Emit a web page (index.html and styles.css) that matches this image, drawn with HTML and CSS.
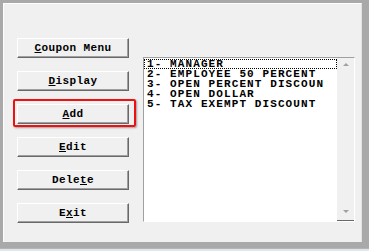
FILE: index.html
```html
<!DOCTYPE html>
<html lang="en">
<head>
<meta charset="UTF-8">
<title>Coupon Menu</title>
<link rel="stylesheet" href="styles.css">
</head>
<body>
<div class="frame">
  <div class="panel">
    <div class="buttons">
      <button class="btn"><u>C</u>oupon Menu</button>
      <button class="btn"><u>D</u>isplay</button>
      <div class="marked">
        <button class="btn"><u>A</u>dd</button>
        <span class="mark"></span>
      </div>
      <button class="btn"><u>E</u>dit</button>
      <button class="btn">Dele<u>t</u>e</button>
      <button class="btn">E<u>x</u>it</button>
    </div>

    <div class="listbox">
      <div class="items">
        <div class="item focus">1- MANAGER</div>
        <div class="item">2- EMPLOYEE 50 PERCENT</div>
        <div class="item">3- OPEN PERCENT DISCOUN</div>
        <div class="item">4- OPEN DOLLAR</div>
        <div class="item">5- TAX EXEMPT DISCOUNT</div>
      </div>
      <div class="scrollbar">
        <span class="arrow up"></span>
        <span class="arrow down"></span>
      </div>
    </div>
  </div>
</div>
</body>
</html>
```

FILE: styles.css
```css
html, body {
margin: 0;
height: 100%;
}

body {
background: #dfe6ee;
font-family: "Liberation Mono", monospace;
}

.frame {
height: 249px;
background: #a9a9a9;
padding: 3px 7px 0 3px;
box-sizing: border-box;
border-bottom: 1px solid #b4b4b4;
}

.panel {
height: 239px;
background: #f0f0f0;
border-top: 1px solid #fdfdfd;
border-left: 1px solid #fdfdfd;
border-right: 1px solid #e2e2e2;
box-sizing: border-box;
display: flex;
align-items: flex-start;
padding: 34px 0 0 13px;
}

.buttons {
width: 112px;
display: flex;
flex-direction: column;
gap: 13px;
}

.btn {
width: 112px;
height: 20px;
padding: 0;
margin: 0;
background: #f0f0f0;
border-top: 1px solid #ffffff;
border-left: 1px solid #ffffff;
border-right: 1px solid #696969;
border-bottom: 1px solid #696969;
box-shadow: inset -1px -1px 0 #a0a0a0;
font-family: "Liberation Mono", monospace;
font-weight: bold;
font-size: 11px;
letter-spacing: 0.4px;
color: #000;
cursor: pointer;
}

.btn u {
text-underline-offset: 1px;
}

.marked {
position: relative;
height: 20px;
}

.mark {
position: absolute;
left: -4px;
top: -5px;
right: -7px;
bottom: -3px;
border: 2px solid #ee1111;
border-radius: 2px;
box-shadow: 1px 1px 2px rgba(0,0,0,0.35);
}

.listbox {
margin: 19px 0 0 14px;
width: 212px;
height: 165px;
box-sizing: border-box;
border-top: 1px solid #a0a0a0;
border-left: 1px solid #a0a0a0;
border-bottom: 1px solid #ffffff;
border-right: 1px solid #ffffff;
background: #ffffff;
display: flex;
}

.items {
flex: 1;
padding-top: 1px;
}

.item {
height: 10px;
line-height: 10px;
padding-left: 3px;
font-weight: bold;
font-size: 11px;
letter-spacing: 1.1px;
white-space: nowrap;
}

.item.focus {
border: 1px dotted #000;
box-sizing: border-box;
padding-left: 2px;
line-height: 8px;
}

.scrollbar {
width: 17px;
background: #f0f0f0;
position: relative;
border-bottom: 1px solid #696969;
}

.arrow {
position: absolute;
left: 6px;
width: 0;
height: 0;
border-left: 3px solid transparent;
border-right: 3px solid transparent;
}

.arrow.up {
top: 5px;
border-bottom: 3px solid #a0a0a0;
}

.arrow.down {
bottom: 7px;
border-top: 3px solid #a0a0a0;
}
```
